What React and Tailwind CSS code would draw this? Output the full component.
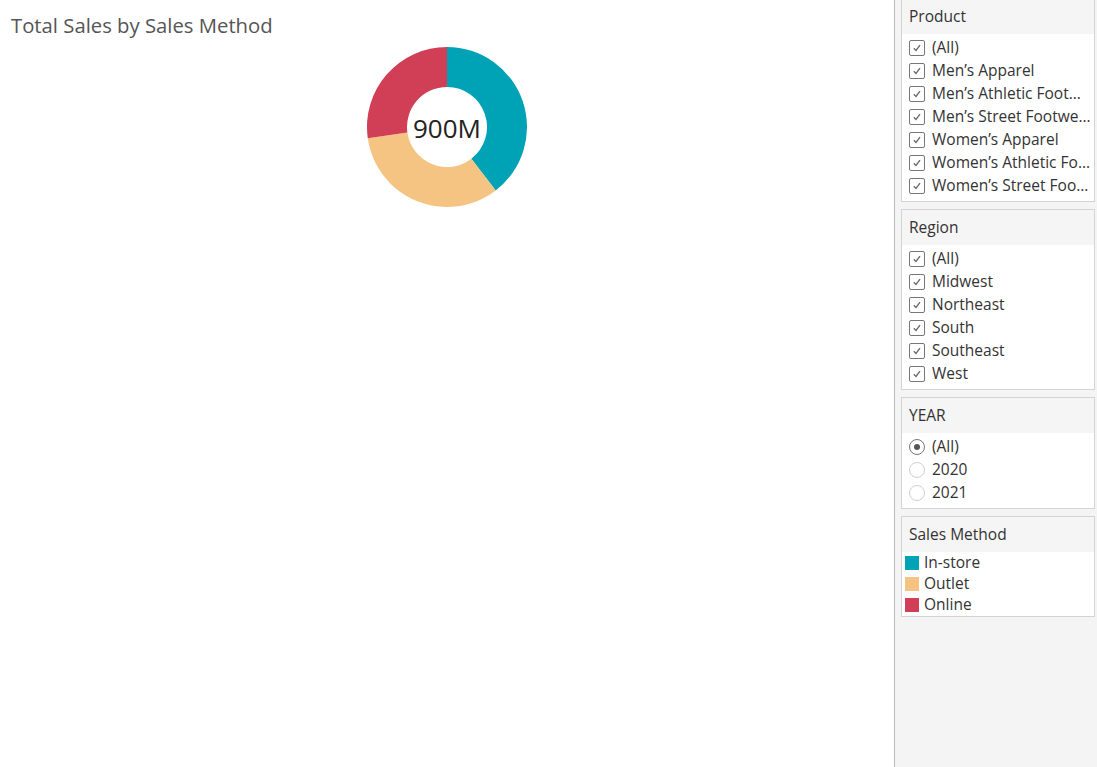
import React from "react";

const FONT = { fontFamily: '"Open Sans", "Liberation Sans", sans-serif' };

function arcPath(cx, cy, r0, r1, a0, a1) {
  const rad = (a) => ((a - 90) * Math.PI) / 180;
  const p = (r, a) => [cx + r * Math.cos(rad(a)), cy + r * Math.sin(rad(a))];
  const large = a1 - a0 > 180 ? 1 : 0;
  const [x1, y1] = p(r1, a0);
  const [x2, y2] = p(r1, a1);
  const [x3, y3] = p(r0, a1);
  const [x4, y4] = p(r0, a0);
  return `M${x1} ${y1} A${r1} ${r1} 0 ${large} 1 ${x2} ${y2} L${x3} ${y3} A${r0} ${r0} 0 ${large} 0 ${x4} ${y4} Z`;
}

function Donut() {
  const segs = [
    { a0: 0, a1: 142.5, c: "#00a3b6" },
    { a0: 142.5, a1: 262, c: "#f6c482" },
    { a0: 262, a1: 360, c: "#d13f56" },
  ];
  return (
    <div className="relative w-[160px] h-[160px]">
      <svg width="160" height="160" viewBox="0 0 160 160">
        {segs.map((s, i) => (
          <path key={i} d={arcPath(80, 80, 40, 80, s.a0, s.a1)} fill={s.c} />
        ))}
      </svg>
      <div className="absolute inset-0 flex items-center justify-center text-[26px] text-[#222] pt-[2px]" style={FONT}>
        900M
      </div>
    </div>
  );
}

function Check() {
  return (
    <span className="w-[16px] h-[16px] border border-[#777] rounded-[2px] bg-white flex items-center justify-center shrink-0">
      <svg width="12" height="12" viewBox="0 0 12 12">
        <path d="M2.8 6.2 L5 8.4 L9 3.2" fill="none" stroke="#666" strokeWidth="1.3" />
      </svg>
    </span>
  );
}

function Radio({ on }) {
  return (
    <span className={`w-[16px] h-[16px] rounded-full border ${on ? "border-[#777]" : "border-[#d0d0d0]"} bg-white flex items-center justify-center shrink-0`}>
      {on && <span className="w-[6px] h-[6px] rounded-full bg-[#555]" />}
    </span>
  );
}

function Panel({ title, children, first }) {
  return (
    <div className={`bg-white border border-[#d4d4d4] min-w-0 ${first ? "-mt-[2px]" : ""}`}>
      <div className="h-[35px] bg-[#f5f5f5] px-[7px] flex items-center text-[15.5px] text-[#333]">{title}</div>
      {children}
    </div>
  );
}

function CheckList({ items }) {
  return (
    <div className="pt-[2px] pb-[4px]">
      {items.map((t) => (
        <div key={t} className="h-[23px] flex items-center pl-[7px] pr-[3px] gap-[7px] min-w-0">
          <Check />
          <span className="text-[15.5px] text-[#333] whitespace-nowrap overflow-hidden text-ellipsis min-w-0">{t}</span>
        </div>
      ))}
    </div>
  );
}

export default function App() {
  return (
    <div className="w-[1097px] h-[767px] flex bg-white overflow-hidden" style={FONT}>
      <div className="w-[894px] shrink-0 flex flex-col">
        <div className="pl-[11px] pt-[12px] text-[20.3px] leading-[26px] text-[#555]">Total Sales by Sales Method</div>
        <div className="flex justify-center pt-[9px]">
          <Donut />
        </div>
      </div>
      <div className="w-[203px] shrink-0 min-w-0 bg-[#f4f4f4] border-l border-[#bbb] pl-[6px] pr-[2px] flex flex-col gap-[7px]">
        <Panel title="Product" first>
          <CheckList
            items={[
              "(All)",
              "Men’s Apparel",
              "Men’s Athletic Footwear",
              "Men’s Street Footwear",
              "Women’s Apparel",
              "Women’s Athletic Footwear",
              "Women’s Street Footwear",
            ]}
          />
        </Panel>
        <Panel title="Region">
          <CheckList items={["(All)", "Midwest", "Northeast", "South", "Southeast", "West"]} />
        </Panel>
        <Panel title="YEAR">
          <div className="pt-[2px] pb-[4px]">
            {[["(All)", true], ["2020", false], ["2021", false]].map(([t, on]) => (
              <div key={t} className="h-[23px] flex items-center pl-[7px] gap-[7px]">
                <Radio on={on} />
                <span className="text-[15.5px] text-[#333]">{t}</span>
              </div>
            ))}
          </div>
        </Panel>
        <Panel title="Sales Method">
          <div className="pb-[1px]">
            {[["In-store", "#00a3b6"], ["Outlet", "#f6c482"], ["Online", "#d13f56"]].map(([t, c]) => (
              <div key={t} className="h-[21px] flex items-center pl-[3px] gap-[5px]">
                <span className="w-[14px] h-[14px] shrink-0" style={{ background: c }} />
                <span className="text-[15.5px] text-[#333]">{t}</span>
              </div>
            ))}
          </div>
        </Panel>
      </div>
    </div>
  );
}
